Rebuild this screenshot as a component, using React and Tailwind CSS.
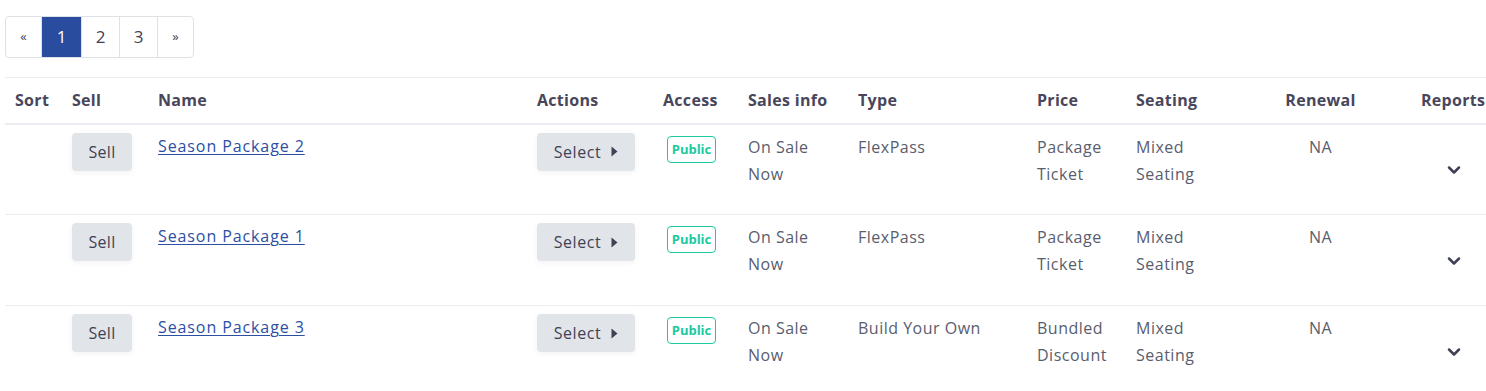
import { ChevronDown } from 'lucide-react';

const rows = [
  { name: 'Season Package 2', type: 'FlexPass', price: ['Package', 'Ticket'] },
  { name: 'Season Package 1', type: 'FlexPass', price: ['Package', 'Ticket'] },
  { name: 'Season Package 3', type: 'Build Your Own', price: ['Bundled', 'Discount'] },
];

function Caret() {
  return (
    <svg width="7" height="11" viewBox="0 0 7 11" className="ml-[10px]">
      <path d="M0.5 0.5 L6.5 5.5 L0.5 10.5 Z" fill="#3f4254" />
    </svg>
  );
}

function Pager() {
  const items = [
    { label: '«', w: 'w-[35px]', cls: 'text-[13px]' },
    { label: '1', w: 'w-[40px]', active: true },
    { label: '2', w: 'w-[38px]' },
    { label: '3', w: 'w-[38px]' },
    { label: '»', w: 'w-[36px]', cls: 'text-[13px]' },
  ];
  return (
    <div className="flex ml-[5px] mt-[16px] h-[42px] border border-[#dee2e6] rounded-[4px] w-max overflow-hidden">
      {items.map((it, i) => (
        <div
          key={i}
          className={`${it.w} h-full flex items-center justify-center ${i > 0 ? 'border-l border-[#dee2e6]' : ''} ${
            it.active ? 'bg-[#2a4c9e] text-white border-[#2a4c9e]' : 'text-[#3f4254]'
          } ${it.cls || 'text-[17px]'}`}
        >
          {it.label}
        </div>
      ))}
    </div>
  );
}

export default function App() {
  const th = 'px-[10px] text-left font-bold text-[16px] tracking-[0.3px] text-[#48465b] align-middle';
  const td = 'px-[10px] pt-[9px] align-top';
  return (
    <div className="w-[1486px] h-[391px] overflow-hidden bg-white" style={{ fontFamily: '"Open Sans", "Liberation Sans", sans-serif' }}>
      <Pager />
      <div className="ml-[5px] mt-[19px] w-[1520px]">
        <table className="table-fixed border-collapse w-[1520px] text-[16px] text-[#595d6e]">
          <colgroup>
            <col className="w-[57px]" />
            <col className="w-[86px]" />
            <col className="w-[379px]" />
            <col className="w-[126px]" />
            <col className="w-[85px]" />
            <col className="w-[110px]" />
            <col className="w-[179px]" />
            <col className="w-[99px]" />
            <col className="w-[124px]" />
            <col className="w-[141px]" />
            <col className="w-[134px]" />
          </colgroup>
          <thead>
            <tr className="h-[46px] border-t border-[#ebedf2] border-b-2">
              <th className={th}>Sort</th>
              <th className={th}>Sell</th>
              <th className={th}>Name</th>
              <th className={th}>Actions</th>
              <th className={th}>Access</th>
              <th className={th}>Sales info</th>
              <th className={th}>Type</th>
              <th className={th}>Price</th>
              <th className={th}>Seating</th>
              <th className={`${th} !text-center`}>Renewal</th>
              <th className={`${th} !text-left !pl-[30px]`}>Reports</th>
            </tr>
          </thead>
          <tbody className="tracking-[0.5px]">
            {rows.map((r, i) => (
              <tr key={i} className={`h-[91px] ${i > 0 ? 'border-t border-[#ebedf2]' : ''}`}>
                <td className={td}></td>
                <td className="px-[10px] pt-[8px] align-top">
                  <button className="w-[60px] h-[38px] rounded-[4px] bg-[#e1e4e9] text-[#3f4254] tracking-[0.3px] shadow-[0_2px_6px_rgba(0,0,0,0.05)]">
                    Sell
                  </button>
                </td>
                <td className={`${td} leading-[24px]`}>
                  <a href="#" className="text-[#2c4fa3] underline underline-offset-2 decoration-1 tracking-[0.9px]">{r.name}</a>
                </td>
                <td className="px-[10px] pt-[8px] align-top">
                  <button className="w-[98px] h-[38px] rounded-[4px] bg-[#e1e4e9] text-[#3f4254] tracking-[0.6px] flex items-center justify-center shadow-[0_2px_6px_rgba(0,0,0,0.05)]">
                    Select
                    <Caret />
                  </button>
                </td>
                <td className="px-[10px] pt-[11px] align-top">
                  <span className="ml-[4px] inline-flex items-center justify-center w-[49px] h-[27px] border border-[#1dc9a0] rounded-[4px] text-[#1dc9a0] text-[13px] font-bold tracking-normal">
                    Public
                  </span>
                </td>
                <td className={`${td} leading-[27px]`}>
                  On Sale
                  <br />
                  Now
                </td>
                <td className={`${td} leading-[27px]`}>{r.type}</td>
                <td className={`${td} leading-[27px]`}>
                  {r.price[0]}
                  <br />
                  {r.price[1]}
                </td>
                <td className={`${td} leading-[27px]`}>
                  Mixed
                  <br />
                  Seating
                </td>
                <td className={`${td} leading-[27px] text-center`}>NA</td>
                <td className="align-middle pl-[53px] pt-[2px]">
                  <ChevronDown size={20} strokeWidth={3} color="#3f4254" />
                </td>
              </tr>
            ))}
          </tbody>
        </table>
      </div>
    </div>
  );
}
